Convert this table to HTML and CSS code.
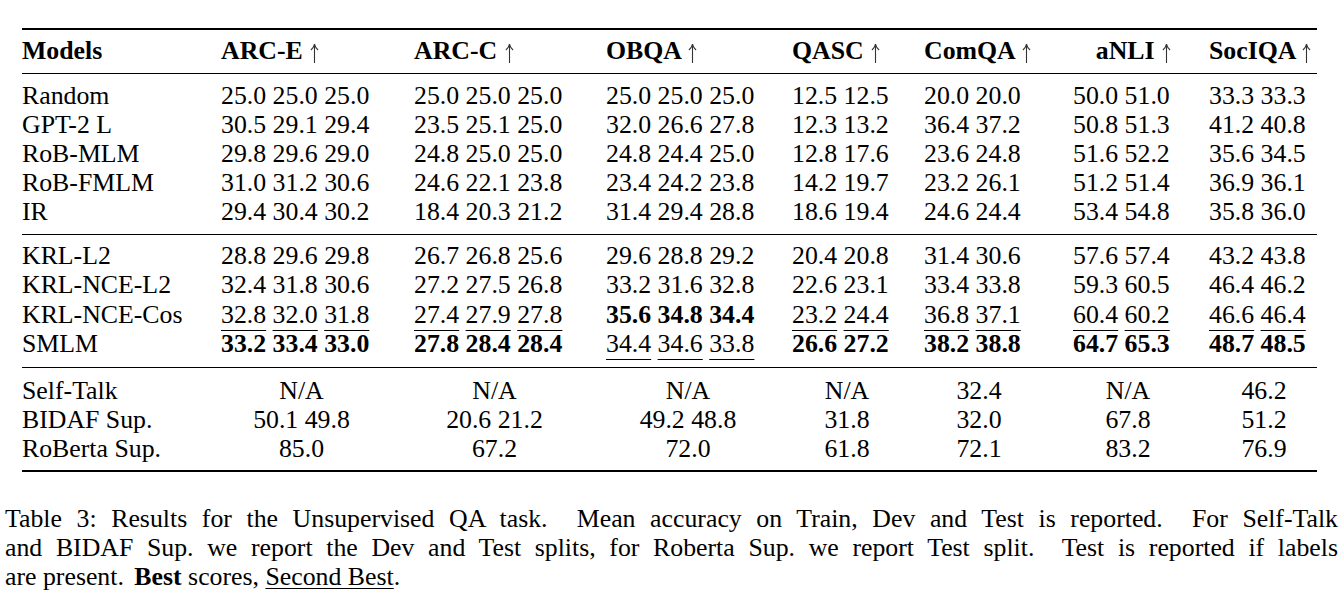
FILE: index.html
```html
<!DOCTYPE html>
<html>
<head>
<meta charset="utf-8">
<link rel="stylesheet" href="styles.css">
</head>
<body>
<div class="page">
  <table class="res">
    <colgroup>
      <col class="c0"><col class="c1"><col class="c2"><col class="c3"><col class="c4"><col class="c5"><col class="c6"><col class="c7">
    </colgroup>
    <thead>
      <tr>
        <th>Models</th>
        <th>ARC-E <svg class="arr" viewBox="0 0 9 20"><path d="M4.5 2V20M0.9 7Q3.6 5 4.5 1Q5.4 5 8.1 7"/></svg></th>
        <th>ARC-C <svg class="arr" viewBox="0 0 9 20"><path d="M4.5 2V20M0.9 7Q3.6 5 4.5 1Q5.4 5 8.1 7"/></svg></th>
        <th>OBQA <svg class="arr" viewBox="0 0 9 20"><path d="M4.5 2V20M0.9 7Q3.6 5 4.5 1Q5.4 5 8.1 7"/></svg></th>
        <th>QASC <svg class="arr" viewBox="0 0 9 20"><path d="M4.5 2V20M0.9 7Q3.6 5 4.5 1Q5.4 5 8.1 7"/></svg></th>
        <th>ComQA <svg class="arr" viewBox="0 0 9 20"><path d="M4.5 2V20M0.9 7Q3.6 5 4.5 1Q5.4 5 8.1 7"/></svg></th>
        <th class="right">aNLI <svg class="arr" viewBox="0 0 9 20"><path d="M4.5 2V20M0.9 7Q3.6 5 4.5 1Q5.4 5 8.1 7"/></svg></th>
        <th>SocIQA <svg class="arr" viewBox="0 0 9 20"><path d="M4.5 2V20M0.9 7Q3.6 5 4.5 1Q5.4 5 8.1 7"/></svg></th>
      </tr>
    </thead>
    <tbody class="g1">
      <tr><td>Random</td><td>25.0 25.0 25.0</td><td>25.0 25.0 25.0</td><td>25.0 25.0 25.0</td><td>12.5 12.5</td><td>20.0 20.0</td><td>50.0 51.0</td><td>33.3 33.3</td></tr>
      <tr><td>GPT-2 L</td><td>30.5 29.1 29.4</td><td>23.5 25.1 25.0</td><td>32.0 26.6 27.8</td><td>12.3 13.2</td><td>36.4 37.2</td><td>50.8 51.3</td><td>41.2 40.8</td></tr>
      <tr><td>RoB-MLM</td><td>29.8 29.6 29.0</td><td>24.8 25.0 25.0</td><td>24.8 24.4 25.0</td><td>12.8 17.6</td><td>23.6 24.8</td><td>51.6 52.2</td><td>35.6 34.5</td></tr>
      <tr><td>RoB-FMLM</td><td>31.0 31.2 30.6</td><td>24.6 22.1 23.8</td><td>23.4 24.2 23.8</td><td>14.2 19.7</td><td>23.2 26.1</td><td>51.2 51.4</td><td>36.9 36.1</td></tr>
      <tr><td>IR</td><td>29.4 30.4 30.2</td><td>18.4 20.3 21.2</td><td>31.4 29.4 28.8</td><td>18.6 19.4</td><td>24.6 24.4</td><td>53.4 54.8</td><td>35.8 36.0</td></tr>
    </tbody>
    <tbody class="g2">
      <tr><td>KRL-L2</td><td>28.8 29.6 29.8</td><td>26.7 26.8 25.6</td><td>29.6 28.8 29.2</td><td>20.4 20.8</td><td>31.4 30.6</td><td>57.6 57.4</td><td>43.2 43.8</td></tr>
      <tr><td>KRL-NCE-L2</td><td>32.4 31.8 30.6</td><td>27.2 27.5 26.8</td><td>33.2 31.6 32.8</td><td>22.6 23.1</td><td>33.4 33.8</td><td>59.3 60.5</td><td>46.4 46.2</td></tr>
      <tr><td>KRL-NCE-Cos</td><td><u>32.8</u> <u>32.0</u> <u>31.8</u></td><td><u>27.4</u> <u>27.9</u> <u>27.8</u></td><td><b>35.6 34.8 34.4</b></td><td><u>23.2</u> <u>24.4</u></td><td><u>36.8</u> <u>37.1</u></td><td><u>60.4</u> <u>60.2</u></td><td><u>46.6</u> <u>46.4</u></td></tr>
      <tr><td>SMLM</td><td><b>33.2 33.4 33.0</b></td><td><b>27.8 28.4 28.4</b></td><td><u>34.4</u> <u>34.6</u> <u>33.8</u></td><td><b>26.6 27.2</b></td><td><b>38.2 38.8</b></td><td><b>64.7 65.3</b></td><td><b>48.7 48.5</b></td></tr>
    </tbody>
    <tbody class="g3">
      <tr><td>Self-Talk</td><td><span class="cv w3">N/A</span></td><td><span class="cv w3">N/A</span></td><td><span class="cv w3b">N/A</span></td><td><span class="cv w2">N/A</span></td><td><span class="cv w2">32.4</span></td><td><span class="cv w2">N/A</span></td><td><span class="cv w2">46.2</span></td></tr>
      <tr><td>BIDAF Sup.</td><td><span class="cv w3">50.1 49.8</span></td><td><span class="cv w3">20.6 21.2</span></td><td><span class="cv w3b">49.2 48.8</span></td><td><span class="cv w2">31.8</span></td><td><span class="cv w2">32.0</span></td><td><span class="cv w2">67.8</span></td><td><span class="cv w2">51.2</span></td></tr>
      <tr><td>RoBerta Sup.</td><td><span class="cv w3">85.0</span></td><td><span class="cv w3">67.2</span></td><td><span class="cv w3b">72.0</span></td><td><span class="cv w2">61.8</span></td><td><span class="cv w2">72.1</span></td><td><span class="cv w2">83.2</span></td><td><span class="cv w2">76.9</span></td></tr>
    </tbody>
  </table>

  <div class="caption">
    <div class="line full">Table 3: Results for the Unsupervised QA task. &nbsp;Mean accuracy on Train, Dev and Test is reported. &nbsp;For Self-Talk</div>
    <div class="line full">and BIDAF Sup. we report the Dev and Test splits, for Roberta Sup. we report Test split. &nbsp;Test is reported if labels</div>
    <div class="line">are present. <span class="sp"></span><b>Best</b> scores, <u class="cu">Second Best</u>.</div>
  </div>
</div>
</body>
</html>
```

FILE: styles.css
```css
html, body {
  margin: 0;
  padding: 0;
  background: #ffffff;
}

body {
  font-family: "Liberation Serif", "Times New Roman", serif;
  font-size: 25.8px;
  color: #000;
}

.page {
  padding-top: 28px;
}

.res {
  margin-left: 22px;
  width: 1295px;
  border-collapse: collapse;
  table-layout: fixed;
}

.c0 { width: 199px; }
.c1 { width: 193px; }
.c2 { width: 192px; }
.c3 { width: 186px; }
.c4 { width: 132px; }
.c5 { width: 149px; }
.c6 { width: 136px; }
.c7 { width: 108px; }

.res th,
.res td {
  padding: 0;
  text-align: left;
  white-space: nowrap;
  vertical-align: baseline;
  line-height: 29.1px;
}

.res th {
  font-weight: bold;
  padding-top: 6px;
  padding-bottom: 7.5px;
}

.res th.right {
  text-align: right;
  padding-right: 38px;
}

.arr {
  width: 9px;
  height: 20px;
  vertical-align: -4px;
  margin-left: 1px;
  fill: none;
  stroke: #333;
  stroke-width: 1.1;
}

.res thead {
  border-top: 2px solid #000;
  border-bottom: 1px solid #000;
}

.g1 {
  border-bottom: 1px solid #000;
}

.g1 tr:first-child td { padding-top: 7px; }
.g1 tr:last-child td { padding-bottom: 8px; }

.g2 {
  border-bottom: 1px solid #000;
}

.g2 td { line-height: 29.4px; }
.g2 tr:first-child td { padding-top: 6px; }
.g2 tr:last-child td { padding-bottom: 8.5px; }

.g3 {
  border-bottom: 2px solid #000;
}

.g3 td { line-height: 28.9px; }
.g3 tr:first-child td { padding-top: 8.5px; }
.g3 tr:last-child td { padding-bottom: 7px; }

.res u {
  text-decoration: underline;
  text-decoration-thickness: 1px;
  text-underline-offset: 7px;
}

.cv {
  display: inline-block;
  text-align: center;
}

.w3 { width: 161px; }
.w3b { width: 164px; }
.w2 { width: 110px; }

.caption {
  margin-top: 33px;
  margin-left: 5px;
  width: 1333px;
  line-height: 28.7px;
}

.caption .line {
  white-space: nowrap;
  text-align: left;
}

.caption .line.full {
  text-align: justify;
  text-align-last: justify;
}

.sp {
  display: inline-block;
  width: 4px;
}

.cu {
  text-decoration: underline;
  text-decoration-thickness: 1px;
  text-underline-offset: 3px;
}
```
